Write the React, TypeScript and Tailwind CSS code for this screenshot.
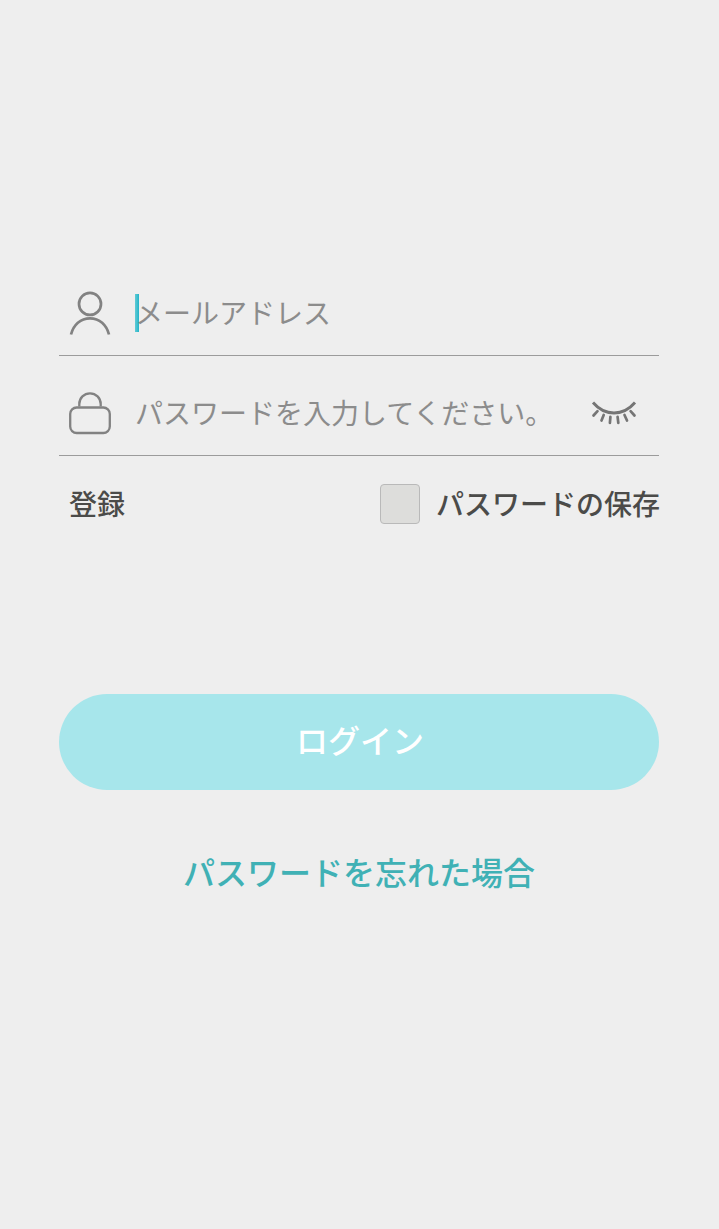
import React, { useState } from 'react';

function UserIcon() {
  return (
    <svg width="44" height="48" viewBox="0 0 44 48" fill="none" stroke="#828282" strokeWidth="2.7">
      <circle cx="22" cy="14.9" r="11" />
      <path d="M3 45.500C5.500 36 12.500 29.300 22 29.300S38.500 36 41 45.500" />
    </svg>
  );
}

function LockIcon() {
  return (
    <svg width="44" height="48" viewBox="0 0 44 48" fill="none" stroke="#828282" strokeWidth="2.3">
      <path d="M11.300 17.500V15a10.700 10.700 0 0 1 21.400 0V17.500" />
      <rect x="2.200" y="18.500" width="39.600" height="25.500" rx="6.500" />
    </svg>
  );
}

function ClosedEyeIcon() {
  return (
    <svg width="46" height="24" viewBox="0 0 46 24" fill="none" stroke="#757575" strokeLinecap="round">
      <path d="M2 1.500Q11 12 23 12T44 1.500" strokeWidth="2.900" strokeLinecap="butt" />
      <path
        d="M6.500 10.200L2.500 14.500M12.700 14L10.500 19.500M19.400 15.800L18.900 21.800M26.600 15.800L27.300 21.800M33.500 14L36 19.500M39.600 10.200L43.500 14.500"
        strokeWidth="2.700"
      />
    </svg>
  );
}

export default function App() {
  const [showPassword, setShowPassword] = useState(false);
  const [remember, setRemember] = useState(false);

  return (
    <main className="flex h-[1229px] w-[719px] flex-col items-start bg-[#eeeeee] pl-[59px] pt-[270px] font-['Noto_Sans_CJK_JP',sans-serif]">
      <form className="w-[600px]" onSubmit={(e) => e.preventDefault()}>
        <label className="flex h-[86px] items-center border-b border-[#9b9b9b] pl-[9px]">
          <UserIcon />
          <span className="ml-[23px] h-[38px] w-1 bg-linear-to-r from-[#5ecbd5] to-[#1fb4c8]" />
          <span className="-ml-1 pb-0.5 text-[28px] leading-[40px] text-[#8c8c8c]">
            メールアドレス
          </span>
        </label>

        <div className="mt-[14px] flex h-[86px] items-center border-b border-[#9b9b9b] pl-[9px] pr-[22px]">
          <LockIcon />
          <span className="ml-[23px] pb-0.5 text-[28px] leading-[40px] text-[#8c8c8c]">
            パスワードを入力してください。
          </span>
          <button
            type="button"
            aria-label="パスワードを表示"
            className="ml-auto"
            onClick={() => setShowPassword(!showPassword)}
          >
            <ClosedEyeIcon />
          </button>
        </div>

        <div className="mt-[28px] flex h-10 items-center justify-between pl-[10px] text-[28px] font-medium leading-[40px] text-[#4b4b49]">
          <a href="#" className="pb-[3px]">
            登録
          </a>
          <button
            type="button"
            role="checkbox"
            aria-checked={remember}
            className="-mr-[1px] flex items-center gap-4"
            onClick={() => setRemember(!remember)}
          >
            <span className="size-10 rounded border border-[#b9b9b9] bg-[#dddddb]" />
            <span className="pb-[3px]">パスワードの保存</span>
          </button>
        </div>

        <button
          type="submit"
          className="mt-[170px] h-24 w-full rounded-full bg-[#a7e6eb] pb-1.5 pl-0.5 text-[32px] font-medium leading-[46px] text-white"
        >
          ログイン
        </button>
      </form>

      <a
        href="#"
        className="mt-[58px] w-[600px] text-center text-[32px] font-medium leading-[46px] text-[#40b1b5]"
      >
        パスワードを忘れた場合
      </a>
    </main>
  );
}
